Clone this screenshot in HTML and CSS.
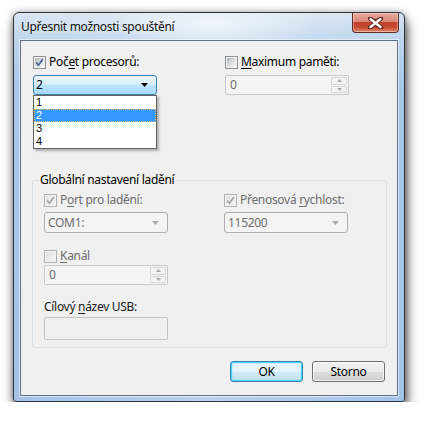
FILE: index.html
```html
<!DOCTYPE html>
<html lang="cs">
<head>
<meta charset="utf-8">
<title>Upřesnit možnosti spouštění</title>
<link rel="stylesheet" href="styles.css">
</head>
<body>
<div class="window">
  <div class="titlebar">
    <span class="title">Upřesnit možnosti spouštění</span>
    <div class="close">
      <svg width="17" height="12" viewBox="0 0 17 12"><path d="M3 1.5 L8.5 5 L14 1.5 M3 10.5 L8.5 7 L14 10.5 M3 1.5 L14 10.5 M14 1.5 L3 10.5" stroke="#5a2620" stroke-width="4.2" stroke-linecap="round" fill="none"/><path d="M3.5 2 L13.5 10 M13.5 2 L3.5 10" stroke="#fff" stroke-width="2.4" stroke-linecap="round" fill="none"/></svg>
    </div>
  </div>
  <div class="client">
    <div class="top-row">
      <div class="col">
        <div class="chk"><span class="box"><svg width="9" height="9" viewBox="0 0 9 9"><path d="M1.2 4.6 L3.4 7.2 L7.8 1.2" stroke="#4a5f97" stroke-width="1.7" fill="none"/></svg></span><span>Poč<u>e</u>t procesorů:</span></div>
        <div class="combo-wrap">
          <div class="combo focus"><span>2</span><svg class="arrow" width="7" height="4" viewBox="0 0 7 4"><path d="M0 0 H7 L3.5 4 Z" fill="#000"/></svg></div>
          <ul class="dropdown">
            <li>1</li>
            <li class="sel">2</li>
            <li>3</li>
            <li>4</li>
          </ul>
        </div>
      </div>
      <div class="col">
        <div class="chk"><span class="box"></span><span><u>M</u>aximum paměti:</span></div>
        <div class="spin disabled"><span>0</span><div class="spin-btns"><span class="sb"><svg width="5" height="3" viewBox="0 0 5 3"><path d="M0 3 L2.5 0 L5 3 Z" fill="#a8a8a8"/></svg></span><span class="sb"><svg width="5" height="3" viewBox="0 0 5 3"><path d="M0 0 H5 L2.5 3 Z" fill="#a8a8a8"/></svg></span></div></div>
      </div>
    </div>

    <fieldset class="group">
      <legend>Globální nastavení ladění</legend>
      <div class="group-body">
        <div class="grow">
          <div class="col">
            <div class="chk disabled"><span class="box"><svg width="9" height="9" viewBox="0 0 9 9"><path d="M1.2 4.6 L3.4 7.2 L7.8 1.2" stroke="#a6a6a6" stroke-width="1.7" fill="none"/></svg></span><span>P<u>o</u>rt pro ladění:</span></div>
            <div class="combo disabled"><span>COM1:</span><svg class="arrow" width="7" height="4" viewBox="0 0 7 4"><path d="M0 0 H7 L3.5 4 Z" fill="#a8a8a8"/></svg></div>
          </div>
          <div class="col">
            <div class="chk disabled"><span class="box"><svg width="9" height="9" viewBox="0 0 9 9"><path d="M1.2 4.6 L3.4 7.2 L7.8 1.2" stroke="#a6a6a6" stroke-width="1.7" fill="none"/></svg></span><span>Přenosová <u>r</u>ychlost:</span></div>
            <div class="combo disabled"><span>115200</span><svg class="arrow" width="7" height="4" viewBox="0 0 7 4"><path d="M0 0 H7 L3.5 4 Z" fill="#a8a8a8"/></svg></div>
          </div>
        </div>
        <div class="col kanal">
          <div class="chk disabled"><span class="box"></span><span><u>K</u>anál</span></div>
          <div class="spin disabled"><span>0</span><div class="spin-btns"><span class="sb"><svg width="5" height="3" viewBox="0 0 5 3"><path d="M0 3 L2.5 0 L5 3 Z" fill="#a8a8a8"/></svg></span><span class="sb"><svg width="5" height="3" viewBox="0 0 5 3"><path d="M0 0 H5 L2.5 3 Z" fill="#a8a8a8"/></svg></span></div></div>
        </div>
        <div class="col usb">
          <div class="lbl">Cílový <u>n</u>ázev USB:</div>
          <div class="textbox"></div>
        </div>
      </div>
    </fieldset>

    <div class="buttons">
      <button class="btn default">OK</button>
      <button class="btn">Storno</button>
    </div>
  </div>
</div>
</body>
</html>
```

FILE: styles.css
```css
html, body {
  margin: 0;
  padding: 0;
  background: #ffffff;
}
body {
  font-family: "Noto Sans", "Open Sans", sans-serif;
  font-size: 12px;
  letter-spacing: -0.3px;
  color: #000;
}
.window {
  box-sizing: border-box;
  margin: 12px 0 0 13px;
  width: 392px;
  height: 390px;
  border: 1px solid #30353c;
  border-radius: 6px 6px 3px 3px;
  background:
    radial-gradient(ellipse 110px 24px at 200px 12px, rgba(255,255,255,0.6), rgba(255,255,255,0) 100%),
    linear-gradient(90deg, rgba(255,255,255,0) 0%, rgba(255,255,255,0.25) 50%, rgba(255,255,255,0) 100%),
    linear-gradient(180deg, #d7e5f3 0px, #bfd6ee 24px, #a9c8e8 70px, #a3c3e6 100%);
  box-shadow: 2px 8px 12px rgba(0,0,0,0.65), 0 0 7px rgba(0,0,0,0.35);
  display: flex;
  flex-direction: column;
}
.titlebar {
  height: 27px;
  flex: none;
  display: flex;
  justify-content: space-between;
  align-items: flex-start;
  padding-left: 7px;
}
.title {
  margin-top: 6px;
  line-height: 16px;
  color: #111;
  text-shadow: 0 0 7px rgba(255,255,255,0.95);
}
.close {
  box-sizing: border-box;
  width: 47px;
  height: 20px;
  margin-right: 5px;
  border: 1px solid #5f2c24;
  border-top: none;
  border-radius: 0 0 4px 4px;
  background: linear-gradient(180deg, #e9a99c 0%, #d9877a 45%, #c1412a 50%, #c94a32 75%, #e18a6c 100%);
  box-shadow: inset 0 0 0 1px rgba(255,255,255,0.35);
  display: flex;
  align-items: center;
  justify-content: center;
}
.client {
  box-sizing: border-box;
  margin: 0 6px 5px 6px;
  flex: 1;
  border: 1px solid #5f7186;
  background: #f0f0f0;
  box-shadow: 0 0 0 1px rgba(255,255,255,0.55);
  display: flex;
  flex-direction: column;
}
.top-row {
  display: grid;
  grid-template-columns: 124px 124px;
  column-gap: 68px;
  padding: 13px 0 0 12px;
}
.col {
  display: flex;
  flex-direction: column;
  gap: 5px;
}
.chk {
  display: flex;
  align-items: center;
  gap: 3px;
  height: 16px;
  line-height: 16px;
  white-space: nowrap;
}
.chk.disabled {
  color: #6d6d6d;
}
.box {
  box-sizing: border-box;
  width: 13px;
  height: 13px;
  flex: none;
  border: 1px solid #8e8f8f;
  padding: 1px;
  background: linear-gradient(135deg, #aeb3b9 0%, #dfe1e3 55%, #f4f4f4 100%) content-box, #f4f4f4;
  display: flex;
}
.box svg { display: block; }
.chk.disabled .box {
  border-color: #b1b1b1;
  background: linear-gradient(135deg, #e3e3e3 0%, #f1f1f1 100%) content-box, #f4f4f4;
}
u { text-decoration-thickness: 1px; text-underline-offset: 2px; }

.combo-wrap {
  position: relative;
}
.combo {
  box-sizing: border-box;
  height: 21px;
  display: flex;
  align-items: center;
  justify-content: space-between;
  padding: 0 5px 0 4px;
  border-radius: 3px;
  line-height: 16px;
}
.combo.focus {
  height: 20px;
  border: 1px solid #3c7fb1;
  background: linear-gradient(180deg, #eaf6fd 0%, #d9f0fc 45%, #bee6fd 50%, #a7d9f5 100%);
  padding: 0 5px 0 2px;
}
.combo.focus .arrow { margin-right: 3px; }
.combo.disabled {
  border: 1px solid #afafaf;
  background: #f4f4f4;
  color: #6d6d6d;
  padding: 0 8px 0 3px;
}
.arrow { display: block; }

.dropdown {
  position: absolute;
  left: 0;
  top: 20px;
  width: 124px;
  box-sizing: border-box;
  margin: 0;
  padding: 0;
  list-style: none;
  background: #fff;
  border: 1px solid #646464;
  box-shadow: 2px 2px 2px rgba(0,0,0,0.28);
  font-family: "Liberation Sans", sans-serif;
  font-size: 11px;
  letter-spacing: 0;
}
.dropdown li {
  height: 13px;
  line-height: 13px;
  padding-left: 2px;
  box-sizing: border-box;
}
.dropdown li.sel {
  background: #3399ff;
  color: #fff;
  outline: 1px dotted #f2c47d;
  outline-offset: -1px;
}

.spin {
  box-sizing: border-box;
  height: 20px;
  border: 1px solid #c9c9c9;
  border-radius: 2px;
  background: #f4f4f4;
  color: #6d6d6d;
  display: flex;
  align-items: center;
  justify-content: space-between;
  padding: 0 0 0 4px;
  line-height: 16px;
}
.spin-btns {
  display: flex;
  flex-direction: column;
  gap: 1px;
  padding: 1px 1px 1px 0;
  height: 100%;
  box-sizing: border-box;
}
.sb {
  box-sizing: border-box;
  width: 16px;
  flex: 1;
  border: 1px solid #d6d6d6;
  border-radius: 1px;
  background: #f4f4f4;
  display: flex;
  align-items: center;
  justify-content: center;
}
.sb svg { display: block; }

.group {
  margin: 77px 0 0 11px;
  width: 355px;
  height: 176px;
  box-sizing: border-box;
  padding: 0;
  border: 1px solid #d5dfe5;
  border-radius: 3px;
  min-inline-size: 0;
}
.group legend {
  margin-left: 6px;
  padding: 0 1px;
  line-height: 16px;
  color: #000;
}
.group-body {
  padding: 4px 0 0 11px;
  display: flex;
  flex-direction: column;
}
.grow {
  display: grid;
  grid-template-columns: 124px 124px;
  column-gap: 56px;
}
.grow .col { gap: 4px; }
.kanal {
  width: 124px;
  margin-top: 15px;
  gap: 1px;
}
.usb {
  width: 124px;
  margin-top: 14px;
  gap: 2px;
}
.lbl {
  line-height: 16px;
  color: #1a1a1a;
}
.textbox {
  box-sizing: border-box;
  height: 23px;
  border: 1px solid #c2c2c2;
  border-radius: 2px;
  background: #f0f0f0;
}

.buttons {
  display: flex;
  justify-content: flex-end;
  gap: 9px;
  padding: 13px 12px 0 0;
}
.btn {
  box-sizing: border-box;
  width: 73px;
  height: 21px;
  font: inherit;
  letter-spacing: inherit;
  color: #000;
  border: 1px solid #707070;
  border-radius: 3px;
  background: linear-gradient(180deg, #f2f2f2 0%, #ebebeb 50%, #dddddd 51%, #cfcfcf 100%);
  box-shadow: inset 0 0 0 1px rgba(255,255,255,0.7);
  padding: 0;
  line-height: 16px;
}
.btn.default {
  border-color: #3c7fb1;
  box-shadow: inset 0 0 0 1px #48d5fd, inset 0 0 2px 1px rgba(72,213,253,0.5);
  background: linear-gradient(180deg, #eaf6fd 0%, #e3f2fa 50%, #d1eaf7 51%, #c4e2f3 100%);
}
```
